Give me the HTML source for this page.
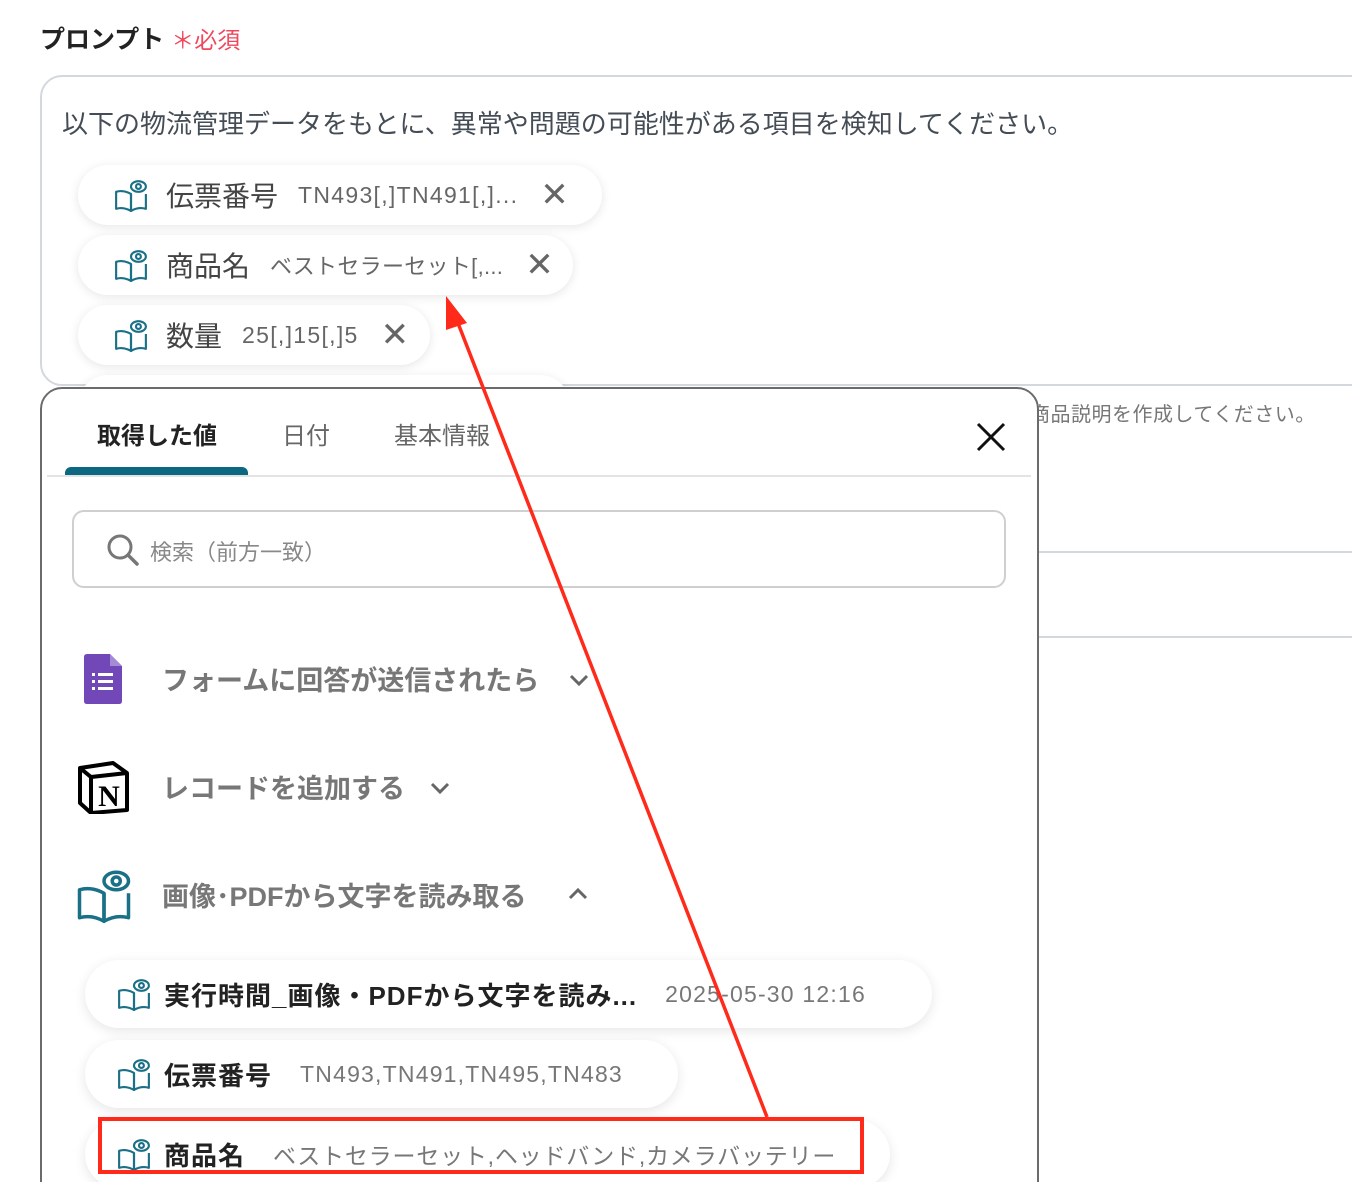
<!DOCTYPE html>
<html><head><meta charset="utf-8"><style>
*{box-sizing:border-box;margin:0;padding:0}
html,body{width:1352px;height:1182px;overflow:hidden}
body{background:#fff;font-family:"Liberation Sans","Noto Sans CJK JP",sans-serif;position:relative}
.a{position:absolute;white-space:nowrap}
.chip,.sc{white-space:nowrap}
.chip span,.sc span{flex:none}
.chip{position:absolute;background:#fff;border-radius:34px;box-shadow:0 2px 10px rgba(0,0,0,0.10);height:60px;display:flex;align-items:center;padding-left:36px}
.chip .l{font-size:28px;color:#444;margin-left:18px}
.chip .v{font-size:23px;color:#666;margin-left:20px;letter-spacing:1.3px}
.chip .x{font-size:34px;color:#666;margin-left:22px;font-weight:300}
.sc{position:absolute;background:#fff;border-radius:34px;box-shadow:0 3px 12px rgba(0,0,0,0.10);height:68px;display:flex;align-items:center;padding-left:32px}
.sc .l{font-size:26px;color:#222;font-weight:bold;margin-left:13px;letter-spacing:1px}
.sc .v{font-size:23px;color:#777;margin-left:28px;letter-spacing:1.2px}
.sec{position:absolute;font-size:27px;color:#777;font-weight:bold;left:162px}
</style></head><body>
<svg width="0" height="0" style="position:absolute"><defs>
<g id="bk" fill="none" stroke="#1a7086" stroke-width="2" stroke-linejoin="round">
<path d="M16 15 Q9 11 2 13 V29 Q9 27 16 31 Z"/>
<path d="M16 15 V31 Q23 27 30 29 V15"/>
<ellipse cx="23" cy="8" rx="7" ry="5" fill="#fff"/>
<circle cx="23" cy="8" r="2.3"/>
</g></defs></svg>

<div class="a" style="left:40px;top:20px;font-size:25px;font-weight:bold;color:#222">プロンプト <span style="color:#f0475c;font-weight:normal;font-size:23px">＊必須</span></div>

<div class="a" style="left:40px;top:75px;width:1400px;height:311px;border:2px solid #d3d8de;border-radius:22px"></div>
<div class="a" style="left:62px;top:104px;font-size:26px;color:#444c55">以下の物流管理データをもとに、異常や問題の可能性がある項目を検知してください。</div>

<div class="chip" style="left:78px;top:165px;width:524px"><svg width="34" height="34" viewBox="0 0 32 32"><use href="#bk"/></svg><span class="l">伝票番号</span><span class="v">TN493[,]TN491[,]...</span><span class="x">✕</span></div>
<div class="chip" style="left:78px;top:235px;width:495px"><svg width="34" height="34" viewBox="0 0 32 32"><use href="#bk"/></svg><span class="l">商品名</span><span class="v" style="letter-spacing:0.3px;font-size:22px">ベストセラーセット[,...</span><span class="x">✕</span></div>
<div class="chip" style="left:78px;top:305px;width:352px"><svg width="34" height="34" viewBox="0 0 32 32"><use href="#bk"/></svg><span class="l">数量</span><span class="v">25[,]15[,]5</span><span class="x">✕</span></div>
<div class="chip" style="left:78px;top:375px;width:492px"></div>

<div class="a" style="left:1030px;top:398px;font-size:20px;color:#777;letter-spacing:0.5px">商品説明を作成してください。</div>
<div class="a" style="left:1038px;top:551px;width:320px;height:2px;background:#d3d8de"></div>
<div class="a" style="left:1038px;top:636px;width:320px;height:2px;background:#d3d8de"></div>

<div class="a" style="left:40px;top:387px;width:999px;height:840px;border:2px solid #6b6b6b;border-radius:22px;background:#fff"></div>
<div class="a" style="left:97px;top:416px;font-size:24px;font-weight:bold;color:#222">取得した値</div>
<div class="a" style="left:282px;top:416px;font-size:24px;color:#666">日付</div>
<div class="a" style="left:394px;top:416px;font-size:24px;color:#666">基本情報</div>
<div class="a" style="left:65px;top:467px;width:183px;height:9px;background:#0b6880;border-radius:6px 6px 0 0"></div>
<div class="a" style="left:47px;top:475px;width:984px;height:2px;background:#e3e3e3"></div>
<svg class="a" style="left:975px;top:421px" width="32" height="32" viewBox="0 0 32 32"><path d="M3 3L29 29M29 3L3 29" stroke="#111" stroke-width="3"/></svg>

<div class="a" style="left:72px;top:510px;width:934px;height:78px;border:2px solid #cfcfcf;border-radius:12px"></div>
<svg class="a" style="left:106px;top:533px" width="34" height="34" viewBox="0 0 34 34"><circle cx="14" cy="14" r="11" fill="none" stroke="#777" stroke-width="3"/><path d="M22 22L31 31" stroke="#777" stroke-width="3.5" stroke-linecap="round"/></svg>
<div class="a" style="left:150px;top:535px;font-size:22px;color:#888">検索（前方一致）</div>

<svg class="a" style="left:84px;top:654px" width="38" height="50" viewBox="0 0 38 50"><path d="M3 0H26L38 12V47Q38 50 35 50H3Q0 50 0 47V3Q0 0 3 0Z" fill="#7248b9"/><path d="M26 0L38 12H26Z" fill="#a48bd6"/><g fill="#fff"><rect x="8" y="19" width="3" height="3"/><rect x="14" y="19" width="15" height="3"/><rect x="8" y="26" width="3" height="3"/><rect x="14" y="26" width="15" height="3"/><rect x="8" y="33" width="3" height="3"/><rect x="14" y="33" width="15" height="3"/></g></svg>
<div class="sec" style="top:659px">フォームに回答が送信されたら</div>
<svg class="a" style="left:568px;top:672px" width="22" height="16" viewBox="0 0 22 16"><path d="M3 4L11 12L19 4" fill="none" stroke="#666" stroke-width="3"/></svg>

<svg class="a" style="left:77px;top:760px" width="53" height="54" viewBox="0 0 53 54"><path d="M3 8L36 3L50 13V50L14 53L3 43Z" fill="#fff" stroke="#000" stroke-width="4" stroke-linejoin="round"/><path d="M3 8L14 17L50 13M14 17V53" fill="none" stroke="#000" stroke-width="4"/><text x="32" y="46" font-family="Liberation Serif,serif" font-weight="bold" font-size="30" text-anchor="middle">N</text></svg>
<div class="sec" style="top:767px">レコードを追加する</div>
<svg class="a" style="left:429px;top:780px" width="22" height="16" viewBox="0 0 22 16"><path d="M3 4L11 12L19 4" fill="none" stroke="#666" stroke-width="3"/></svg>

<svg class="a" style="left:76px;top:866px" width="56" height="58" viewBox="0 0 32 32"><use href="#bk"/></svg>
<div class="sec" style="top:875px">画像･PDFから文字を読み取る</div>
<svg class="a" style="left:567px;top:886px" width="22" height="16" viewBox="0 0 22 16"><path d="M3 12L11 4L19 12" fill="none" stroke="#666" stroke-width="3"/></svg>

<div class="sc" style="left:85px;top:960px;width:847px"><svg width="34" height="34" viewBox="0 0 32 32"><use href="#bk"/></svg><span class="l">実行時間_画像・PDFから文字を読み...</span><span class="v">2025-05-30 12:16</span></div>
<div class="sc" style="left:85px;top:1040px;width:593px"><svg width="34" height="34" viewBox="0 0 32 32"><use href="#bk"/></svg><span class="l">伝票番号</span><span class="v">TN493,TN491,TN495,TN483</span></div>
<div class="sc" style="left:85px;top:1120px;width:805px"><svg width="34" height="34" viewBox="0 0 32 32"><use href="#bk"/></svg><span class="l">商品名</span><span class="v" style="letter-spacing:0.8px">ベストセラーセット,ヘッドバンド,カメラバッテリー</span></div>

<div class="a" style="left:98px;top:1117px;width:766px;height:57px;border:4px solid #ff2a1a"></div>
<svg class="a" style="left:0;top:0" width="1352" height="1182"><path d="M767 1117L456 318" stroke="#ff2a1a" stroke-width="3.5"/><path d="M446 296L467 323L446 330Z" fill="#ff2a1a"/></svg>
</body></html>
